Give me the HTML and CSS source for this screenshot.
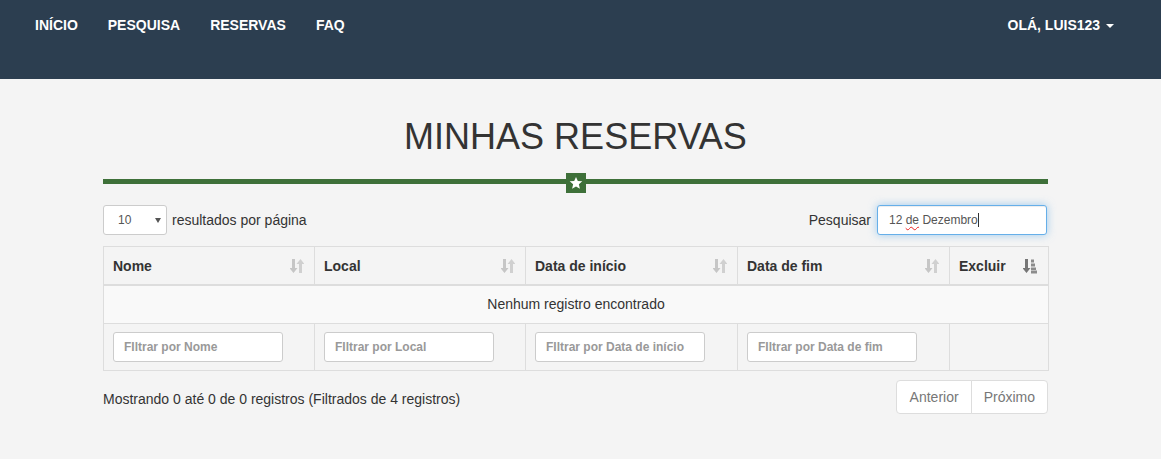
FILE: index.html
```html
<!DOCTYPE html>
<html lang="pt">
<head>
<meta charset="utf-8">
<title>Minhas Reservas</title>
<link rel="stylesheet" href="styles.css">
</head>
<body>
<nav class="navbar">
  <ul class="nav-left">
    <li><a href="#">Início</a></li>
    <li><a href="#">Pesquisa</a></li>
    <li><a href="#">Reservas</a></li>
    <li><a href="#">FAQ</a></li>
  </ul>
  <ul class="nav-right">
    <li><a href="#">Olá, luis123 <span class="caret"></span></a></li>
  </ul>
</nav>

<main class="page">
  <div class="container">
    <h1 class="title">Minhas Reservas</h1>
    <div class="divider">
      <div class="divider-line"></div>
      <div class="divider-star">
        <svg width="14" height="14" viewBox="0 0 24 24"><path fill="#fff" d="M12 1.5l3.1 7.1 7.7.6-5.9 5 1.8 7.6L12 17.8l-6.7 4 1.8-7.6-5.9-5 7.7-.6z"/></svg>
      </div>
      <div class="divider-line"></div>
    </div>

    <div class="controls">
      <div class="length">
        <div class="select-sm"><span>10</span><span class="select-arrow"></span></div>
        <span class="length-label">resultados por página</span>
      </div>
      <div class="search">
        <span class="search-label">Pesquisar</span>
        <div class="search-input"><span>12 <span class="misspelled">de</span> Dezembro</span><span class="text-caret"></span></div>
      </div>
    </div>

    <table class="grid">
      <colgroup>
        <col style="width:211px"><col style="width:211px"><col style="width:212px"><col style="width:212px"><col style="width:99px">
      </colgroup>
      <thead>
        <tr>
          <th><div class="th-inner"><span>Nome</span><svg class="sort" width="14" height="16" viewBox="0 0 14 16"><path fill="#c6c6c6" d="M2 1h3v9h2.5L3.5 15 -.5 10H2z"/><path fill="#d0d0d0" d="M9 15h3V6h2.5L10.5 1 6.5 6H9z"/></svg></div></th>
          <th><div class="th-inner"><span>Local</span><svg class="sort" width="14" height="16" viewBox="0 0 14 16"><path fill="#c6c6c6" d="M2 1h3v9h2.5L3.5 15 -.5 10H2z"/><path fill="#d0d0d0" d="M9 15h3V6h2.5L10.5 1 6.5 6H9z"/></svg></div></th>
          <th><div class="th-inner"><span>Data de início</span><svg class="sort" width="14" height="16" viewBox="0 0 14 16"><path fill="#c6c6c6" d="M2 1h3v9h2.5L3.5 15 -.5 10H2z"/><path fill="#d0d0d0" d="M9 15h3V6h2.5L10.5 1 6.5 6H9z"/></svg></div></th>
          <th><div class="th-inner"><span>Data de fim</span><svg class="sort" width="14" height="16" viewBox="0 0 14 16"><path fill="#c6c6c6" d="M2 1h3v9h2.5L3.5 15 -.5 10H2z"/><path fill="#d0d0d0" d="M9 15h3V6h2.5L10.5 1 6.5 6H9z"/></svg></div></th>
          <th><div class="th-inner"><span>Excluir</span><svg class="sort" width="15" height="16" viewBox="0 0 15 16"><path fill="#767676" d="M2 1h3v9h2.5L3.5 15 -.5 10H2z"/><path fill="#8c8c8c" d="M8 1.5h3v3H8zM8 5.5h4v3H8zM8 9.5h5v2.5H8zM8 12.5h6v3H8z"/></svg></div></th>
        </tr>
      </thead>
      <tbody>
        <tr class="empty-row"><td colspan="5">Nenhum registro encontrado</td></tr>
      </tbody>
      <tfoot>
        <tr class="filter-row">
          <td><input class="filter" type="text" placeholder="FIltrar por Nome"></td>
          <td><input class="filter" type="text" placeholder="FIltrar por Local"></td>
          <td><input class="filter" type="text" placeholder="FIltrar por Data de início"></td>
          <td><input class="filter" type="text" placeholder="FIltrar por Data de fim"></td>
          <td></td>
        </tr>
      </tfoot>
    </table>

    <div class="footer-row">
      <div class="info">Mostrando 0 até 0 de 0 registros (Filtrados de 4 registros)</div>
      <ul class="pagination">
        <li><a href="#">Anterior</a></li>
        <li><a href="#">Próximo</a></li>
      </ul>
    </div>
  </div>
</main>
</body>
</html>
```

FILE: styles.css
```css
* { box-sizing: border-box; }
html, body { margin: 0; padding: 0; }
body {
  font-family: "Liberation Sans", Arial, sans-serif;
  font-size: 14px;
  line-height: 20px;
  color: #333;
  background: #f4f4f4;
}
a { text-decoration: none; color: inherit; }
ul { list-style: none; margin: 0; padding: 0; }

.navbar {
  height: 79px;
  background: #2c3e50;
  display: flex;
  justify-content: space-between;
  align-items: flex-start;
  padding: 0 32px 0 20px;
}
.nav-left, .nav-right { display: flex; }
.navbar a {
  display: block;
  padding: 15px 15px;
  color: #fff;
  font-weight: bold;
  font-size: 14px;
  line-height: 20px;
  text-transform: uppercase;
}
.caret {
  display: inline-block;
  width: 0; height: 0;
  margin-left: 2px;
  vertical-align: middle;
  border-top: 4px solid #fff;
  border-left: 4px solid transparent;
  border-right: 4px solid transparent;
}

.page { padding-top: 38px; padding-bottom: 40px; }
.container { width: 945px; margin-left: 103px; }

.title {
  margin: 0;
  text-align: center;
  font-size: 36px;
  line-height: 40px;
  font-weight: normal;
  text-transform: uppercase;
  color: #333;
}

.divider {
  display: flex;
  align-items: flex-start;
  margin-top: 16px;
  height: 20px;
}
.divider-line {
  flex: 1;
  height: 5px;
  margin-top: 6px;
  background: #3e7039;
}
.divider-star {
  width: 20px;
  height: 20px;
  background: #3e7039;
  display: flex;
  align-items: center;
  justify-content: center;
}
.divider-star svg { margin-top: -1px; }

.controls {
  margin-top: 12px;
  display: flex;
  justify-content: space-between;
  align-items: center;
}
.length, .search { display: flex; align-items: center; }
.select-sm {
  width: 64px;
  height: 30px;
  background: #fff;
  border: 1px solid #ccc;
  border-radius: 3px;
  font-size: 12px;
  display: flex;
  align-items: center;
  justify-content: space-between;
  padding: 0 5px 0 14px;
  color: #555;
}
.select-arrow {
  width: 0; height: 0;
  border-top: 5px solid #555;
  border-left: 3px solid transparent;
  border-right: 3px solid transparent;
}
.length-label { margin-left: 5px; }
.search-label { margin-right: 6px; }
.search-input {
  width: 170px;
  height: 30px;
  background: #fff;
  border: 1px solid #66afe9;
  border-radius: 3px;
  box-shadow: inset 0 1px 1px rgba(0,0,0,.075), 0 0 8px rgba(102,175,233,.6);
  font-size: 12px;
  color: #555;
  display: flex;
  align-items: center;
  padding: 0 11px;
  margin-right: 1px;
}
.misspelled { text-decoration: underline wavy #e22; text-decoration-thickness: 1px; text-underline-offset: 2px; }
.text-caret { width: 1px; height: 14px; background: #333; }

.grid {
  margin-top: 11px;
  width: 945px;
  border-collapse: collapse;
  table-layout: fixed;
  border: 1px solid #ddd;
}
.grid th, .grid td {
  border: 1px solid #ddd;
  padding: 8px;
  vertical-align: middle;
}
.grid thead th {
  text-align: left;
  font-weight: bold;
  border-bottom: 2px solid #ddd;
  padding: 9px 8px 8px 9px;
}
.th-inner { display: flex; align-items: center; justify-content: space-between; padding-right: 2px; }
.sort { display: block; }
.empty-row td { background: #f9f9f9; text-align: center; padding: 8px; height: 38px; }
.filter-row td { padding: 8px 8px 8px 9px; height: 47px; }
.filter {
  display: block;
  width: 170px;
  height: 30px;
  border: 1px solid #ccc;
  border-radius: 3px;
  background: #fff;
  font-family: "Liberation Sans", Arial, sans-serif;
  font-size: 12px;
  font-weight: bold;
  padding: 0 10px;
  color: #555;
  outline: none;
}
.filter::placeholder { color: #999; opacity: 1; }

.footer-row {
  margin-top: 9px;
  display: flex;
  justify-content: space-between;
  align-items: flex-start;
}
.info { padding-top: 9px; }
.pagination { display: flex; }
.pagination li a {
  display: block;
  padding: 6px 12px;
  line-height: 20px;
  background: #fff;
  border: 1px solid #ddd;
  color: #777;
}
.pagination li + li a { margin-left: -1px; }
.pagination li:first-child a { border-radius: 4px 0 0 4px; padding-left: 13px; }
.pagination li:last-child a { border-radius: 0 4px 4px 0; }
```
